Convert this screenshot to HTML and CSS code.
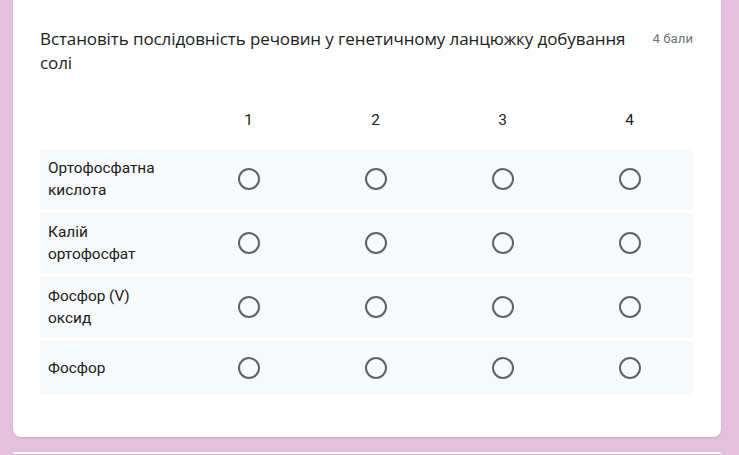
FILE: index.html
```html
<!DOCTYPE html>
<html lang="uk">
<head>
<meta charset="utf-8">
<link rel="stylesheet" href="styles.css">
</head>
<body>
<div class="card">
  <div class="title-row">
    <div class="title">Встановіть послідовність речовин у генетичному ланцюжку добування солі</div>
    <div class="points">4 бали</div>
  </div>
  <div class="grid">
    <div class="head">
      <div class="label"></div>
      <div class="cell">1</div>
      <div class="cell">2</div>
      <div class="cell">3</div>
      <div class="cell">4</div>
    </div>
    <div class="row">
      <div class="label">Ортофосфатна кислота</div>
      <div class="cell"><span class="radio"></span></div>
      <div class="cell"><span class="radio"></span></div>
      <div class="cell"><span class="radio"></span></div>
      <div class="cell"><span class="radio"></span></div>
    </div>
    <div class="row">
      <div class="label">Калій ортофосфат</div>
      <div class="cell"><span class="radio"></span></div>
      <div class="cell"><span class="radio"></span></div>
      <div class="cell"><span class="radio"></span></div>
      <div class="cell"><span class="radio"></span></div>
    </div>
    <div class="row">
      <div class="label">Фосфор (V) оксид</div>
      <div class="cell"><span class="radio"></span></div>
      <div class="cell"><span class="radio"></span></div>
      <div class="cell"><span class="radio"></span></div>
      <div class="cell"><span class="radio"></span></div>
    </div>
    <div class="row">
      <div class="label">Фосфор</div>
      <div class="cell"><span class="radio"></span></div>
      <div class="cell"><span class="radio"></span></div>
      <div class="cell"><span class="radio"></span></div>
      <div class="cell"><span class="radio"></span></div>
    </div>
  </div>
</div>
<div class="card next"></div>
</body>
</html>
```
FILE: styles.css
```css
html, body {
  margin: 0;
  padding: 0;
}
body {
  background: #e3c1dc;
  padding: 0 18px 0 13px;
  font-family: Roboto, "Noto Sans", sans-serif;
  color: #202124;
  overflow: hidden;
  height: 455px;
}
.card {
  background: #fff;
  border-radius: 0 0 8px 8px;
  box-shadow: 0 1px 2px rgba(0,0,0,0.12);
  padding: 27px 28px 42px 27px;
  margin-bottom: 15px;
}
.card.next {
  border-radius: 8px 8px 0 0;
  height: 2px;
  padding: 0;
  margin: 0;
}
.title-row {
  display: flex;
  align-items: flex-start;
  gap: 9px;
}
.title {
  flex: 1;
  font-family: "Open Sans", sans-serif;
  font-size: 17px;
  letter-spacing: -0.1px;
  line-height: 24px;
  color: #202124;
}
.points {
  font-size: 13.2px;
  line-height: 24px;
  color: #70757a;
  white-space: nowrap;
}
.grid {
  margin-top: 33px;
  display: flex;
  flex-direction: column;
  gap: 4px;
}
.head {
  display: flex;
  height: 24px;
  align-items: center;
  font-size: 15.4px;
  margin-bottom: 13px;
}
.row {
  display: flex;
  align-items: center;
  background: #f8f9fa;
  padding: 8px 0;
  min-height: 38px;
}
.label {
  flex: 1;
  padding-left: 8px;
  font-size: 15.4px;
  line-height: 22px;
  color: #202124;
  padding-right: 20px;
}
.cell {
  width: 127px;
  display: flex;
  justify-content: center;
  align-items: center;
}
.radio {
  width: 18px;
  height: 18px;
  border: 2px solid #5f6368;
  border-radius: 50%;
  display: block;
}
```
